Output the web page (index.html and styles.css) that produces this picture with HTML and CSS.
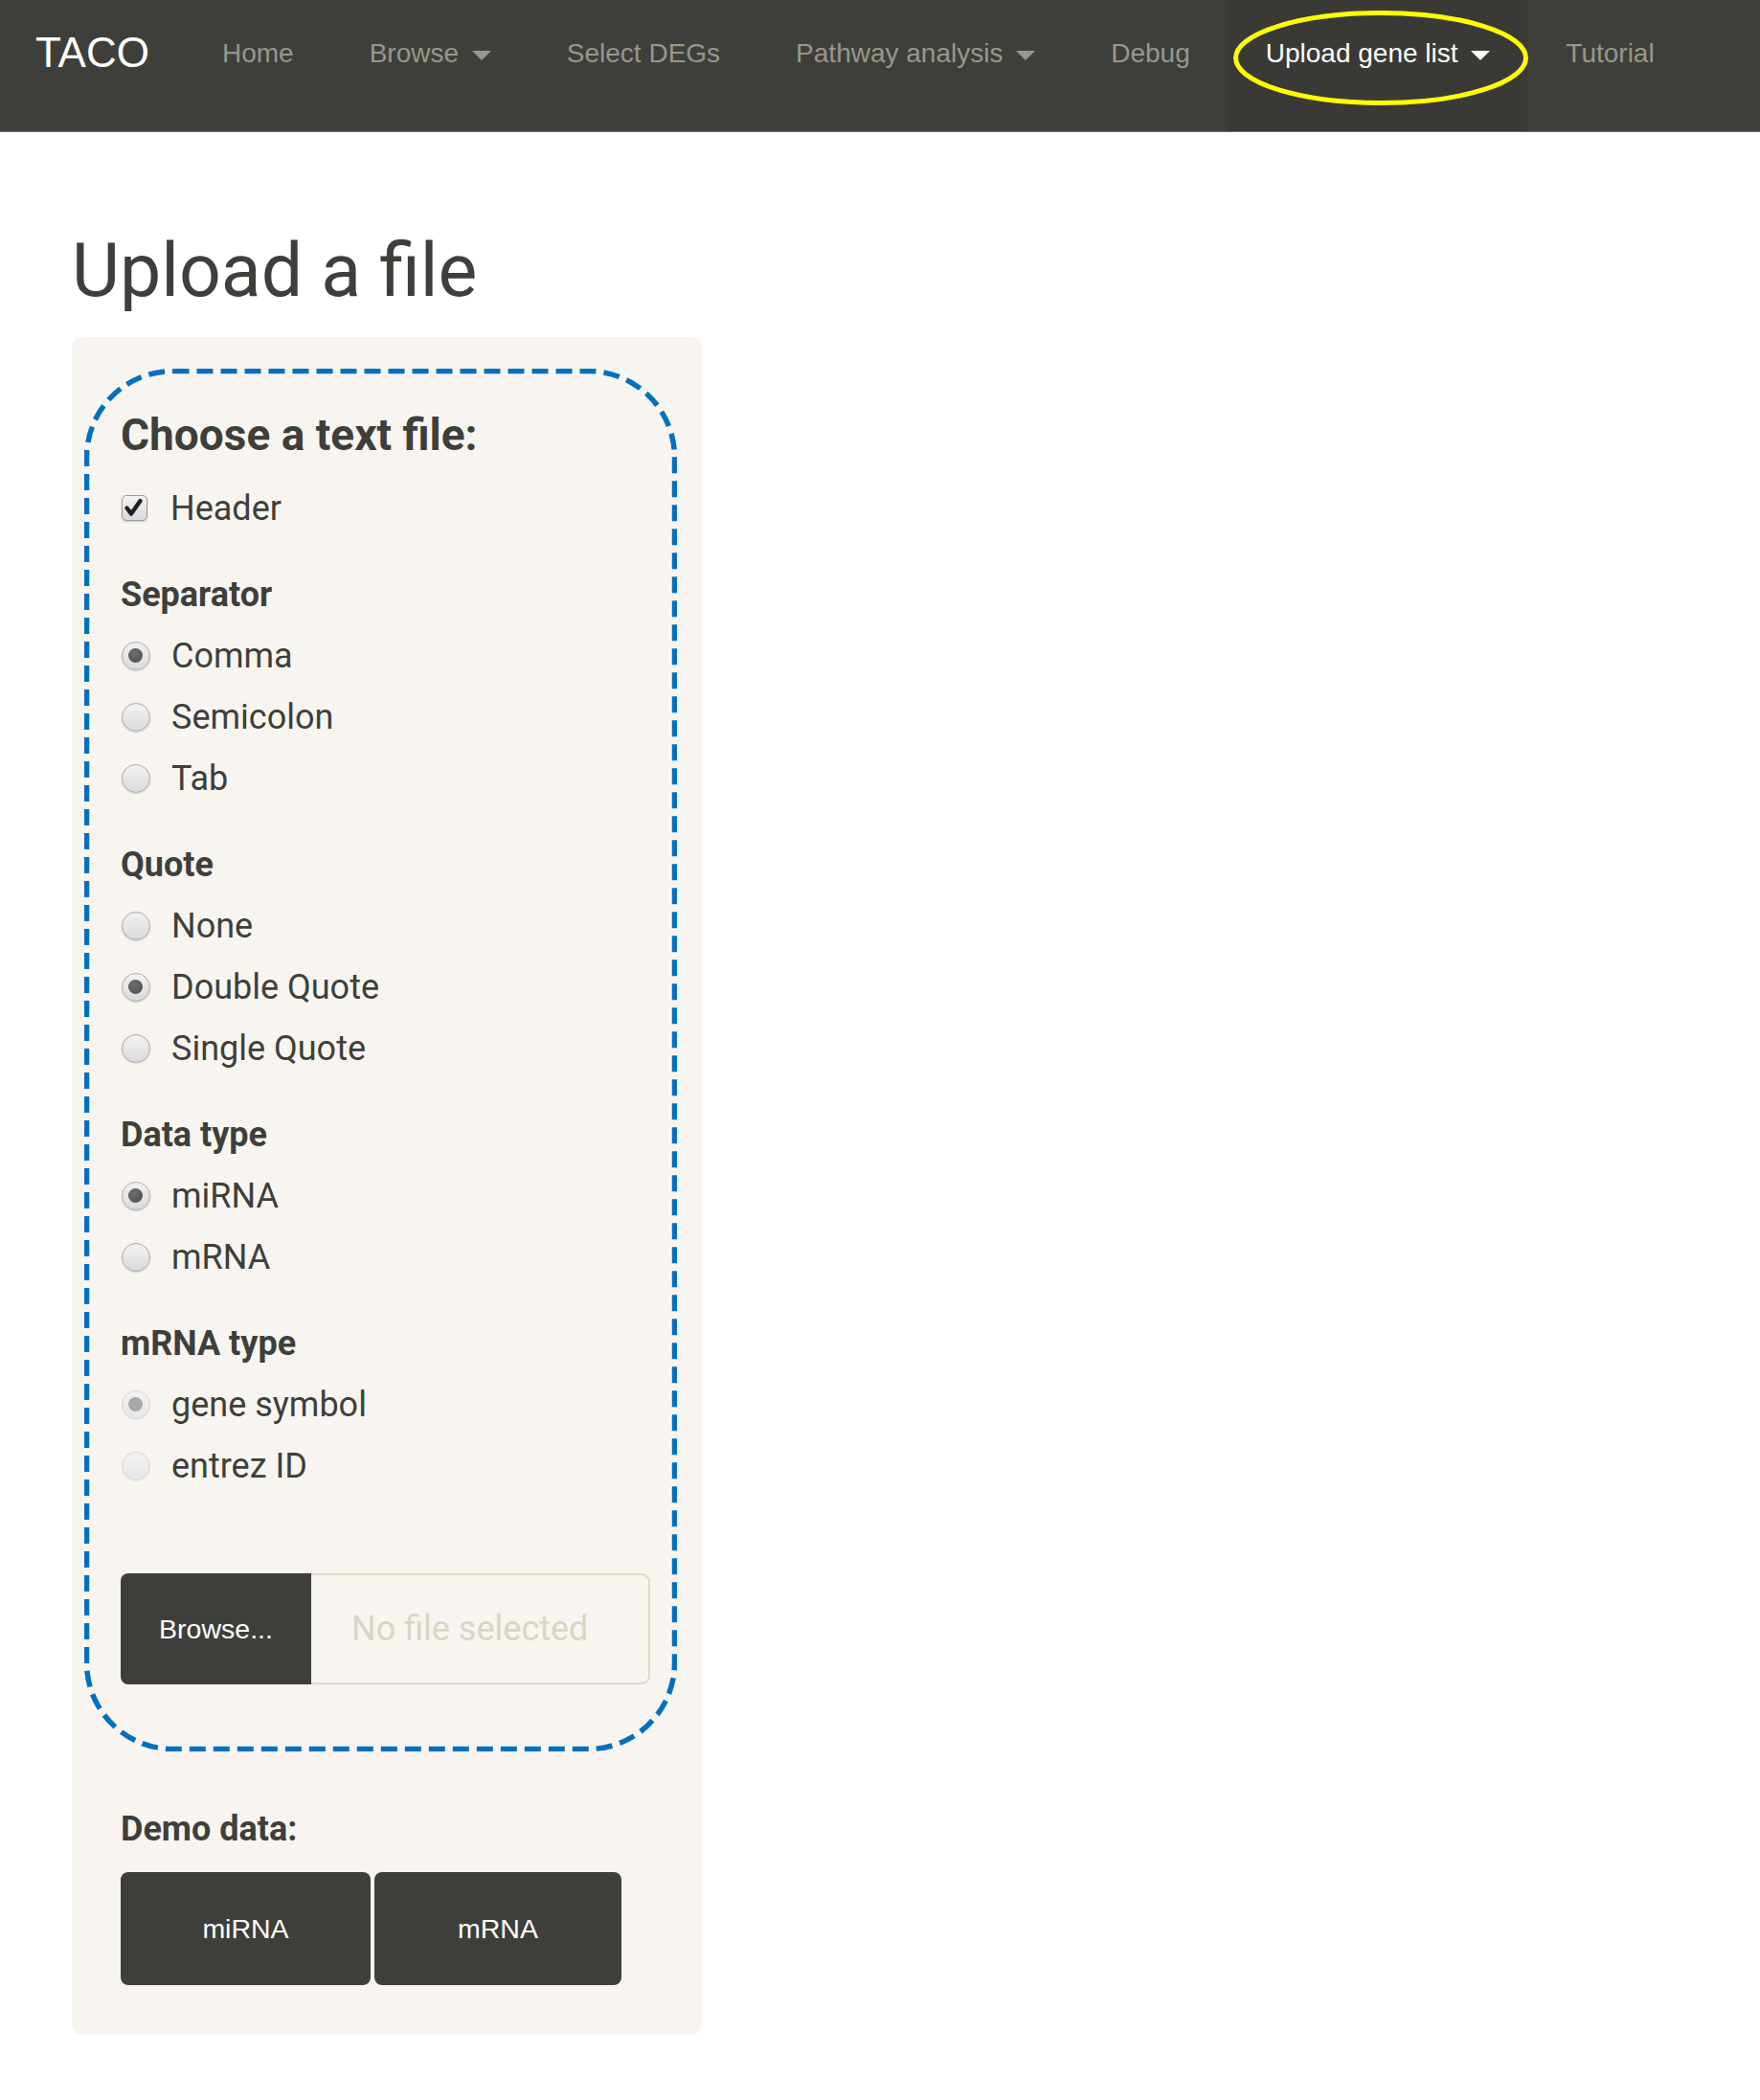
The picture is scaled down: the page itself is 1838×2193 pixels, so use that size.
FILE: index.html
```html
<!DOCTYPE html>
<html lang="en">
<head>
    <meta charset="UTF-8">
    <title>TACO - Upload a file</title>
    <link rel="stylesheet" href="styles.css">
</head>
<body>
    <nav class="navbar">
        <a class="brand" href="#">TACO</a>
        <ul class="nav">
            <li><a href="#">Home</a></li>
            <li><a href="#">Browse <span class="caret"></span></a></li>
            <li><a href="#">Select DEGs</a></li>
            <li><a href="#">Pathway analysis <span class="caret"></span></a></li>
            <li><a href="#">Debug</a></li>
            <li class="active">
                <a href="#">Upload gene list <span class="caret"></span></a>
                <svg class="highlight" width="308" height="99" viewBox="0 0 308 99">
                    <ellipse cx="154" cy="49.5" rx="151.5" ry="47" fill="none" stroke="#ffff00" stroke-width="5"/>
                </svg>
            </li>
            <li><a href="#">Tutorial</a></li>
        </ul>
    </nav>

    <div class="page">
        <h2 class="title">Upload a file</h2>

        <div class="well">
            <!-- dashed frame drawn round the upload part -->
            <svg class="frame" width="619" height="1444" viewBox="0 0 619 1444">
                <rect x="2.5" y="2.5" width="614" height="1439" rx="90" ry="90" fill="none" stroke="#0070c0" stroke-width="5.5" stroke-dasharray="17 8"/>
            </svg>

            <h4>Choose a text file:</h4>
            <label class="option">
                <span class="check">
                    <svg width="27" height="27" viewBox="0 0 27 27"><path d="M5.5 13.5 L10 19.5 L19.5 6" fill="none" stroke="#1f1f1f" stroke-width="4.4" stroke-linecap="round" stroke-linejoin="round"/></svg>
                </span>
                Header
            </label>

            <div class="group">
                <div class="group-label">Separator</div>
                <label class="option"><span class="radio checked"></span>Comma</label>
                <label class="option"><span class="radio"></span>Semicolon</label>
                <label class="option"><span class="radio"></span>Tab</label>
            </div>

            <div class="group">
                <div class="group-label">Quote</div>
                <label class="option"><span class="radio"></span>None</label>
                <label class="option"><span class="radio checked"></span>Double Quote</label>
                <label class="option"><span class="radio"></span>Single Quote</label>
            </div>

            <div class="group">
                <div class="group-label">Data type</div>
                <label class="option"><span class="radio checked"></span>miRNA</label>
                <label class="option"><span class="radio"></span>mRNA</label>
            </div>

            <div class="group">
                <div class="group-label">mRNA type</div>
                <label class="option"><span class="radio checked disabled"></span>gene symbol</label>
                <label class="option"><span class="radio disabled"></span>entrez ID</label>
            </div>

            <div class="file-row">
                <span class="btn-browse">Browse...</span>
                <span class="file-name">No file selected</span>
            </div>

            <div class="group-label demo-label">Demo data:</div>
            <div class="demo-buttons">
                <button class="btn-demo mirna">miRNA</button>
                <button class="btn-demo">mRNA</button>
            </div>
        </div>
    </div>
</body>
</html>
```

FILE: styles.css
```css
body {
    margin: 0;
    font-family: Roboto, "Liberation Sans", Arial, sans-serif;
    color: #3e3f3a;
    background: #ffffff;
}
.navbar {
    display: flex;
    height: 138px;
    box-sizing: border-box;
    background-color: #3e3f3a;
    border-bottom: 1px solid #6f706a;
}
.brand {
    font-family: "Liberation Sans", Arial, sans-serif;
    font-size: 44px;
    line-height: 44px;
    color: #ffffff;
    text-decoration: none;
    padding: 33px 36px 0 37px;
}
.nav {
    display: flex;
    list-style: none;
    margin: 0;
    padding: 0;
}
.nav li {
    position: relative;
    display: flex;
}
.nav a {
    font-family: "Liberation Sans", Arial, sans-serif;
    font-size: 28px;
    line-height: 28px;
    color: #98978b;
    text-decoration: none;
    padding: 42px 39px 0 40px;
    white-space: nowrap;
}
.nav li.active {
    background-color: #393a35;
}
.nav li.active a {
    color: #ffffff;
}
.caret {
    display: inline-block;
    width: 0;
    height: 0;
    margin-left: 6px;
    vertical-align: middle;
    border-top: 10px solid;
    border-left: 10px solid transparent;
    border-right: 10px solid transparent;
}
.highlight {
    position: absolute;
    left: 6px;
    top: 11px;
}
.page {
    padding: 0 75px;
}
.title {
    font-size: 77px;
    font-weight: 400;
    line-height: 1.1;
    margin: 103px 0 26px;
}
.well {
    position: relative;
    width: 658px;
    box-sizing: border-box;
    padding: 48px 51px 52px;
    background-color: #f8f5f0;
    border-radius: 10px;
}
.frame {
    position: absolute;
    left: 13px;
    top: 33px;
    pointer-events: none;
}
.well h4 {
    font-size: 46px;
    font-weight: 700;
    line-height: 1.1;
    margin: 29px 0 19.5px;
}
.option {
    display: flex;
    align-items: center;
    height: 64px;
    font-size: 36px;
}
.group {
    margin-top: 26px;
}
.group-label {
    display: flex;
    align-items: center;
    height: 64px;
    font-size: 36px;
    font-weight: 700;
}
.check {
    width: 27px;
    height: 27px;
    box-sizing: border-box;
    margin: 0 24px 0 1px;
    border: 1.5px solid #9c9c9c;
    border-radius: 5px;
    background: linear-gradient(#f4f4f4, #d9d9d9);
    box-shadow: 0 1px 2px rgba(0, 0, 0, 0.18);
    display: flex;
    align-items: center;
    justify-content: center;
}
.check svg {
    flex: none;
}
.radio {
    position: relative;
    width: 30px;
    height: 30px;
    box-sizing: border-box;
    margin: 0 22px 0 1px;
    border: 1.5px solid #ababab;
    border-radius: 50%;
    background: linear-gradient(#f3f3f3, #dadada);
    box-shadow: 0 1px 2px rgba(0, 0, 0, 0.15);
}
.radio.checked::after {
    content: "";
    position: absolute;
    left: 6px;
    top: 6px;
    width: 15px;
    height: 15px;
    border-radius: 50%;
    background: radial-gradient(circle at 40% 35%, #6e6e6e, #4a4a4a);
}
.radio.disabled {
    border-color: #d6d6d6;
    background: linear-gradient(#f3f3f3, #e6e6e6);
    box-shadow: 0 1px 1px rgba(0, 0, 0, 0.06);
}
.radio.disabled.checked::after {
    background: #a8a8a8;
}
.file-row {
    display: flex;
    height: 116px;
    width: 553px;
    margin-top: 80.5px;
}
.btn-browse {
    display: flex;
    align-items: center;
    justify-content: center;
    width: 199px;
    flex: none;
    background-color: #3e3f3a;
    color: #ffffff;
    font-family: "Liberation Sans", Arial, sans-serif;
    font-size: 28.5px;
    border-radius: 8px 0 0 8px;
}
.file-name {
    flex: 1;
    display: flex;
    align-items: center;
    padding-left: 42px;
    border: 2.5px solid #e0d9cc;
    border-left: none;
    border-radius: 0 9px 9px 0;
    font-size: 36px;
    color: #dcd4c6;
}
.demo-label {
    margin-top: 119px;
}
.demo-buttons {
    display: flex;
    gap: 4px;
    margin-top: 13px;
}
.btn-demo {
    width: 258px;
    height: 118px;
    border: none;
    border-radius: 8px;
    background-color: #3e3f3a;
    color: #ffffff;
    font-family: "Liberation Sans", Arial, sans-serif;
    font-size: 28.5px;
    padding: 0;
}
.btn-demo.mirna {
    width: 261px;
}
```
